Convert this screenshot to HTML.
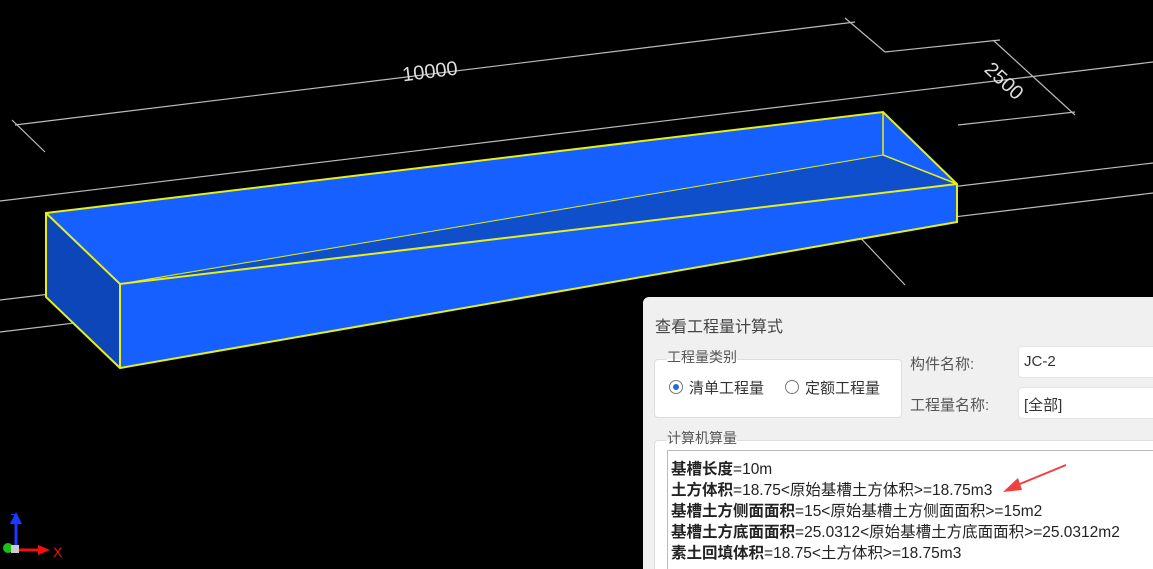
<!DOCTYPE html>
<html style="overflow:hidden;height:569px"><head><meta charset="utf-8"><style>
body{margin:0;width:1153px;height:569px;background:#000;overflow:hidden;position:relative;font-family:"Liberation Sans","Microsoft YaHei","Noto Sans CJK SC",sans-serif}
svg{position:absolute;left:0;top:0}
.dlg{position:absolute;left:643px;top:297px;width:510px;height:272px;background:#f0f0f0;border-radius:6px 0 0 0;color:#333;overflow:hidden}
.a{position:absolute;white-space:nowrap}
.box{position:absolute;background:#fff;border:1px solid #ddd;border-radius:4px}
.t{position:absolute;left:28px;font-size:15.5px;color:#222;white-space:nowrap}
.t b{font-weight:bold}
</style></head><body>
<svg width="1153" height="569">
<g stroke="#bbb" stroke-width="1.2" fill="none">
<line x1="0" y1="201" x2="1153" y2="62"/>
<line x1="0" y1="300" x2="1153" y2="163"/>
<line x1="0" y1="332" x2="1153" y2="193"/>
<line x1="15" y1="125" x2="855" y2="22"/>
<line x1="12" y1="120" x2="45" y2="152"/>
<line x1="845" y1="18" x2="885" y2="52"/>
<line x1="885" y1="52" x2="1000" y2="40"/>
<line x1="993" y1="40" x2="1075" y2="115"/>
<line x1="958" y1="125" x2="1075" y2="112"/>
<line x1="855" y1="232" x2="905" y2="285"/>
</g>
<text x="430" y="78" fill="#ddd" font-size="20" text-anchor="middle" transform="rotate(-7 430 72)" font-family="Liberation Sans">10000</text>
<text x="1005" y="88" fill="#ddd" font-size="20" text-anchor="middle" transform="rotate(43 1005 80)" font-family="Liberation Sans">2500</text>
<polygon points="46,213 883,112 957,184 120,284" fill="#1560ff"/>
<polygon points="120,284 957,184 957,222 120,368" fill="#1560ff"/>
<polygon points="120,284 883,155 957,184" fill="#0f4fcc"/>
<polygon points="46,213 120,284 120,368 46,297" fill="#0d46b8"/>
<g stroke="#e6ef1a" stroke-width="2" fill="none">
<polygon points="46,213 883,112 957,184 957,222 120,368 46,297"/>
<polyline points="46,213 120,284 957,184"/>
<line x1="120" y1="284" x2="120" y2="368"/>
<polyline points="883,112 883,155 957,184" stroke-width="1.5"/>
<line x1="120" y1="284" x2="883" y2="155" stroke-width="1"/>
</g>
<line x1="16" y1="545" x2="16" y2="522" stroke="#1a3aff" stroke-width="3"/>
<polygon points="10,524 22,524 16,512" fill="#1a3aff"/>
<text x="10" y="523" fill="#1a3aff" font-size="13" font-family="Liberation Sans">Z</text>
<line x1="16" y1="550" x2="40" y2="550" stroke="#f01010" stroke-width="3"/>
<polygon points="38,545 38,555 50,550" fill="#f01010"/>
<text x="53" y="557" fill="#f01010" font-size="14" font-family="Liberation Sans">X</text>
<circle cx="8" cy="548" r="5" fill="#18c018"/>
<rect x="11" y="545" width="8" height="8" fill="#ccc"/>
</svg>
<div class="dlg">
<div class="a" style="left:12px;top:16px;font-size:16px;color:#444">查看工程量计算式</div>
<div class="box" style="left:11px;top:62px;width:246px;height:57px"></div>
<div class="a" style="left:24px;top:50px;font-size:14px;color:#555;background:linear-gradient(#f0f0f0 60%,#fff 60%)">工程量类别</div>
<div class="a" style="left:26px;top:83px;width:12px;height:12px;border:1px solid #777;border-radius:50%;background:#fff"><div style="margin:3px;width:6px;height:6px;border-radius:50%;background:#1e6fd9"></div></div>
<div class="a" style="left:46px;top:80px;font-size:15px">清单工程量</div>
<div class="a" style="left:142px;top:83px;width:12px;height:12px;border:1px solid #777;border-radius:50%;background:#fff"></div>
<div class="a" style="left:162px;top:80px;font-size:15px">定额工程量</div>
<div class="a" style="left:267px;top:56px;font-size:15px;color:#555">构件名称:</div>
<div class="box" style="left:375px;top:49px;width:150px;height:30px;border-color:#e4e4e4"></div>
<div class="a" style="left:381px;top:56px;font-size:15px">JC-2</div>
<div class="a" style="left:267px;top:97px;font-size:15px;color:#555">工程量名称:</div>
<div class="box" style="left:375px;top:90px;width:150px;height:30px;border-color:#e4e4e4"></div>
<div class="a" style="left:381px;top:97px;font-size:15px">[全部]</div>
<div class="box" style="left:11px;top:143px;width:520px;height:150px"></div>
<div class="a" style="left:24px;top:131px;font-size:14px;color:#555;background:linear-gradient(#f0f0f0 60%,#fff 60%)">计算机算量</div>
<div class="a" style="left:24px;top:153px;width:500px;height:130px;border:1px solid #bbb;background:#fff"></div>
<div class="t" style="top:160px"><b>基槽长度</b>=10m</div>
<div class="t" style="top:181px"><b>土方体积</b>=18.75&lt;原始基槽土方体积&gt;=18.75m3</div>
<div class="t" style="top:202px"><b>基槽土方侧面面积</b>=15&lt;原始基槽土方侧面面积&gt;=15m2</div>
<div class="t" style="top:223px"><b>基槽土方底面面积</b>=25.0312&lt;原始基槽土方底面面积&gt;=25.0312m2</div>
<div class="t" style="top:244px"><b>素土回填体积</b>=18.75&lt;土方体积&gt;=18.75m3</div>
</div>
<svg width="1153" height="569" style="pointer-events:none">
<line x1="1066" y1="465" x2="1015" y2="486" stroke="#f04040" stroke-width="2"/>
<polygon points="1003,492 1018,478 1022,490" fill="#f04040"/>
</svg>
</body></html>
